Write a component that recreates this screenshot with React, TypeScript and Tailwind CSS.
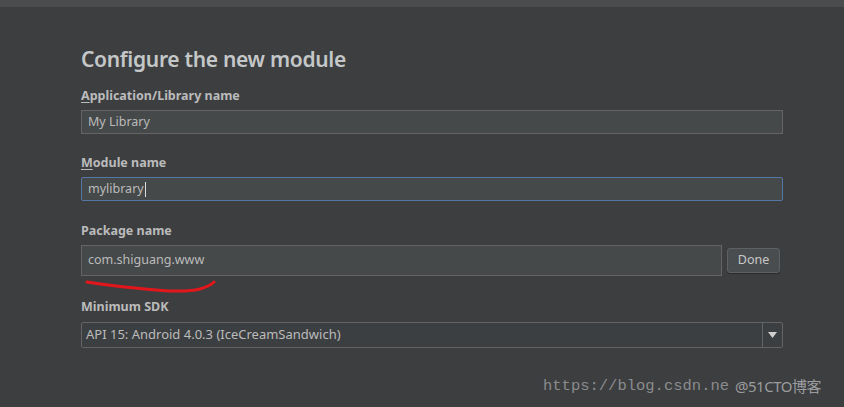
export default function App() {
  return (
    <div className="relative h-[407px] w-[844px] overflow-hidden bg-[#3c3e40] font-['Noto_Sans',sans-serif] text-[#bbbbbb]">
      <div className="h-[7px] bg-[#4b4c4e]" />
      <div className="flex w-[783px] flex-col pl-[81px]">
        <h1 className="mt-[37px] h-[30px] text-[21px] font-semibold leading-[30px] tracking-[-0.3px] text-[#c4c7c8]">
          Configure the new module
        </h1>

        <label className="mt-[13px] text-[12.5px] font-bold leading-[18px]">
          <span className="underline underline-offset-2">A</span>pplication/Library name
        </label>
        <div className="mt-[5px] flex h-[24px] items-center border border-[#646464] bg-[#45494a] px-[6px] text-[12.5px]">
          My Library
        </div>

        <label className="mt-[20px] text-[12.5px] font-bold leading-[18px]">
          <span className="underline underline-offset-2">M</span>odule name
        </label>
        <div className="mt-[5px] flex h-[24px] items-center rounded-[2px] border border-[#5478a4] bg-[#45494a] px-[6px] text-[12.5px]">
          mylibrary
          <span className="ml-px h-[15px] w-px bg-[#dddddd]" />
        </div>

        <label className="mt-[21px] text-[12.5px] font-bold leading-[18px]">Package name</label>
        <div className="mt-[5px] flex items-center gap-[5px]">
          <div className="flex h-[31px] flex-1 items-center border border-[#646464] bg-[#45494a] px-[6px] text-[12.5px]">
            com.shiguang.www
          </div>
          <button className="mr-[3px] flex h-[25px] w-[53px] items-center justify-center rounded-[3px] border border-[#5e6062] bg-[#4a4d50] text-[12.5px] text-[#c8c8c8] shadow-[0_1px_1px_rgba(0,0,0,0.3)]">
            Done
          </button>
        </div>
        <svg className="-ml-[81px] h-[18px] w-[240px]" viewBox="0 0 240 18">
          <path
            d="M87 6 C100 8 115 10 135 12 C160 15 185 17 200 13 C207 11 211 9 214 6"
            fill="none"
            stroke="#e3161b"
            strokeWidth="3"
            strokeLinecap="round"
          />
        </svg>

        <label className="mt-[4px] text-[12.5px] font-bold leading-[18px]">Minimum SDK</label>
        <div className="mt-[6px] flex h-[26px] items-stretch rounded-[2px] border border-[#646464] bg-[#3c3f41] text-[13px]">
          <div className="flex flex-1 items-center px-[4px]">API 15: Android 4.0.3 (IceCreamSandwich)</div>
          <div className="flex w-[20px] items-center justify-center border-l border-[#646464]">
            <svg width="9" height="6" viewBox="0 0 9 6">
              <path d="M0 0 H9 L4.5 6 Z" fill="#d0d0d0" />
            </svg>
          </div>
        </div>
      </div>

      <div className="absolute left-[543px] top-[375px] flex items-center">
        <span className="font-['Liberation_Mono',monospace] text-[15.5px] text-[#8a8c8e]">https://blog.csdn.ne</span>
        <span className="ml-[6px] font-['Noto_Sans','Noto_Sans_CJK_SC',sans-serif] text-[15px] tracking-[-0.5px] text-[#9a9c9e]">
          @51CTO博客
        </span>
      </div>
    </div>
  );
}
